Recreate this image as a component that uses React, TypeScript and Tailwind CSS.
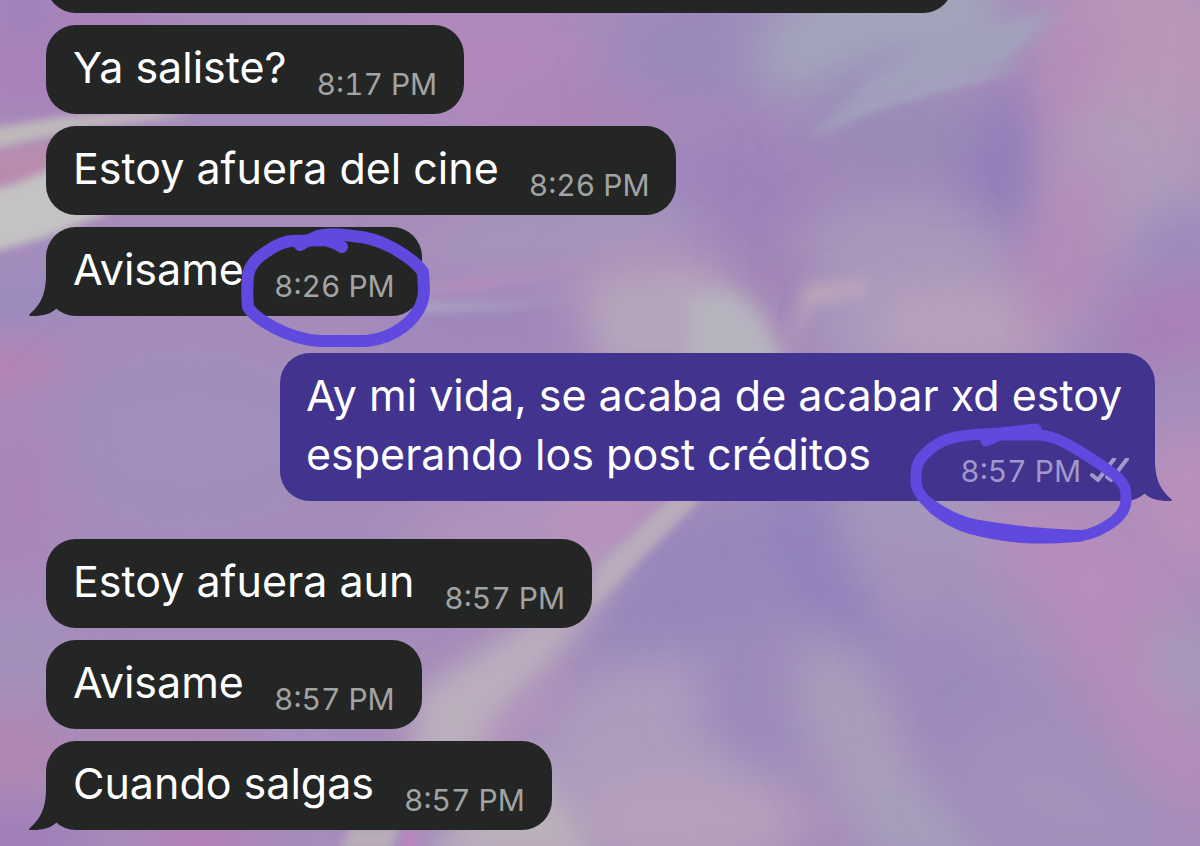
type Message = {
  text: string;
  time: string;
  tail?: boolean;
  circled?: boolean;
};

const firstGroup: Message[] = [
  { text: "Ya saliste?", time: "8:17 PM" },
  { text: "Estoy afuera del cine", time: "8:26 PM" },
  { text: "Avisame", time: "8:26 PM", tail: true, circled: true },
];

const lastGroup: Message[] = [
  { text: "Estoy afuera aun", time: "8:57 PM" },
  { text: "Avisame", time: "8:57 PM" },
  { text: "Cuando salgas", time: "8:57 PM", tail: true },
];

// cx, cy, rx, ry, rotation, colour
const glows: [number, number, number, number, number, string][] = [
  [60, 50, 130, 70, 0, "#a982b9"],
  [22, 8, 30, 22, 0, "#9783be"],
  [20, 310, 70, 40, -10, "#9b8cbe"],
  [5, 368, 70, 20, -5, "#bd80b2"],
  [190, 440, 150, 90, 0, "#a28eba"],
  [20, 500, 40, 90, 0, "#aa85b9"],
  [25, 660, 50, 60, 0, "#a490bb"],
  [10, 755, 60, 40, 0, "#b386b0"],
  [10, 840, 80, 30, 0, "#a07cba"],
  [200, 848, 60, 22, 0, "#bb7ab4"],
  [170, 735, 90, 12, 0, "#bc82b4"],
  [300, 733, 60, 12, 0, "#a590c0"],
  [480, 60, 110, 70, 0, "#b188bb"],
  [610, 105, 110, 30, -10, "#ab84b9"],
  [700, 50, 90, 60, 0, "#9b89bc"],
  [745, 190, 90, 60, 0, "#9c83bb"],
  [560, 235, 160, 25, -6, "#a795bd"],
  [480, 330, 120, 22, -4, "#9c85bd"],
  [650, 300, 80, 50, 0, "#b29cba"],
  [785, 285, 30, 60, -20, "#a184b8"],
  [880, 30, 130, 60, -15, "#a3a5bb"],
  [860, 90, 70, 18, -30, "#9788b9"],
  [900, 145, 90, 40, -10, "#988ab6"],
  [840, 180, 60, 30, 0, "#a088b9"],
  [1010, 175, 50, 90, 15, "#937fba"],
  [910, 250, 110, 45, 0, "#a998bb"],
  [960, 325, 130, 45, 0, "#b7a3bc"],
  [845, 322, 40, 20, 0, "#a397be"],
  [1140, 60, 90, 120, 0, "#b997b8"],
  [1072, 80, 24, 90, 15, "#b58bb8"],
  [1130, 180, 80, 80, 0, "#b09cba"],
  [1065, 250, 36, 100, 15, "#b58cb9"],
  [1180, 255, 50, 50, 0, "#9d8bbd"],
  [1170, 325, 90, 35, -20, "#aa7fb8"],
  [1085, 348, 30, 18, 0, "#998dbb"],
  [1180, 425, 40, 40, 0, "#a08dbd"],
  [1190, 500, 60, 80, 0, "#b890bb"],
  [540, 525, 140, 35, -10, "#b294be"],
  [740, 620, 150, 120, -20, "#9787bc"],
  [650, 750, 120, 90, -20, "#ae9cbd"],
  [790, 690, 90, 100, 20, "#9d8abc"],
  [690, 820, 120, 50, 0, "#b5a0bc"],
  [850, 580, 50, 110, -35, "#9282bc"],
  [930, 530, 100, 60, 20, "#a597bb"],
  [960, 620, 120, 60, 40, "#a592bb"],
  [860, 740, 50, 110, -25, "#ab9cba"],
  [930, 830, 70, 40, 20, "#a5a0bc"],
  [980, 730, 60, 130, -30, "#9d8abc"],
  [1060, 800, 110, 80, 20, "#a390bb"],
  [1090, 570, 110, 55, 30, "#b68dbb"],
  [1140, 690, 40, 140, -32, "#b78dbb"],
  [1190, 670, 36, 60, -30, "#a899b9"],
];

type Blur = "soft" | "mid" | "fine";

// sharper folds of light: points, blur strength, colour
const folds: [string, Blur, string][] = [
  ["-20,150 60,140 110,160 70,185 -20,200", "mid", "#b98cae"],
  ["-20,130 60,117 150,110 190,115 90,128 -20,152", "fine", "#bfb9bb"],
  ["-20,194 20,182 60,165 110,212 50,236 -20,256", "fine", "#c4c2c3"],
  ["380,292 470,278 600,262 480,290 390,298", "fine", "#b18ebc"],
  ["400,302 500,303 580,297 500,308 420,312", "fine", "#a9a4c1"],
  ["600,290 700,275 760,305 790,365 600,365", "soft", "#b5a5bc"],
  ["690,300 730,292 758,318 785,370 690,370", "mid", "#b6b4bf"],
  ["560,500 680,500 600,560 570,590", "soft", "#b993bc"],
  ["672,496 704,496 620,580 590,610 600,565", "fine", "#b9acbc"],
  ["640,540 600,600 530,690 480,760 405,770 420,690 560,600", "soft", "#bbaebd"],
  ["480,735 540,680 560,700 500,750", "soft", "#b394bd"],
  ["420,860 530,755 600,860", "soft", "#bcb0bb"],
  ["404,830 418,830 416,850 404,850", "fine", "#c084be"],
  ["340,850 350,828 400,828 390,850", "fine", "#b9adb9"],
  ["808,138 880,98 1000,66 1060,10 960,30 870,80", "mid", "#a2a2bc"],
  ["808,136 880,108 960,86 1030,66 960,74 870,100", "fine", "#a3a2bd"],
  ["805,285 870,280 870,293 812,305 790,350", "mid", "#bca8ba"],
];

function Wallpaper() {
  return (
    <svg
      className="absolute inset-0 h-full w-full"
      viewBox="0 0 1200 846"
      preserveAspectRatio="none"
      aria-hidden="true"
    >
      <defs>
        <filter id="haze" x="-150%" y="-200%" width="400%" height="500%">
          <feGaussianBlur stdDeviation="24" />
        </filter>
        <filter id="soft" x="-50%" y="-50%" width="200%" height="200%">
          <feGaussianBlur stdDeviation="14" />
        </filter>
        <filter id="mid" x="-50%" y="-50%" width="200%" height="200%">
          <feGaussianBlur stdDeviation="8" />
        </filter>
        <filter id="fine" x="-50%" y="-100%" width="200%" height="300%">
          <feGaussianBlur stdDeviation="4" />
        </filter>
      </defs>
      <rect width="1200" height="846" fill="#a58cba" />
      {glows.map(([cx, cy, rx, ry, angle, fill], i) => (
        <ellipse
          key={i}
          cx={cx}
          cy={cy}
          rx={rx}
          ry={ry}
          fill={fill}
          transform={`rotate(${angle} ${cx} ${cy})`}
          filter="url(#haze)"
        />
      ))}
      {folds.map(([points, blur, fill], i) => (
        <polygon key={i} points={points} fill={fill} filter={`url(#${blur})`} />
      ))}
    </svg>
  );
}

function Tail({ className }: { className: string }) {
  return (
    <svg viewBox="0 0 30 60" className={className} aria-hidden="true">
      <path
        fill="currentColor"
        d="M17 0 L17 18 C17 38 12 48 1 58 C-1 60 0 60 4 60 C14 60 22 58 28 52 L30 40 L26 0 Z"
      />
    </svg>
  );
}

function DoubleCheck() {
  return (
    <svg
      viewBox="0 0 40 26"
      className="h-[26px] w-10"
      fill="none"
      stroke="currentColor"
      strokeWidth="4"
      strokeLinecap="round"
      strokeLinejoin="round"
      aria-label="Read"
    >
      <path d="M3 17 L9 22 L25 1" />
      <path d="M18 19 L22 22 L38 1" />
    </svg>
  );
}

// Hand drawn marker rings around the timestamps
function SmallRing() {
  return (
    <svg
      viewBox="240 228 190 122"
      className="absolute top-0 -right-2 h-[122px] w-[190px] overflow-visible"
      fill="none"
      stroke="#6049df"
      strokeWidth="12"
      strokeLinecap="round"
      strokeLinejoin="round"
      aria-hidden="true"
    >
      <path d="M300 246 L298 242 C288 241 276 246 266 253 C255 260 249 268 248 277 C247 288 247 298 248 308 C253 316 262 322 273 328 C288 336 302 341 320 342 L367 342 C382 340 394 335 403 328 C416 318 424 306 424 290 L423 273 C416 263 404 255 391 248 C378 241 366 238 353 237 C340 235 326 235 318 237 C310 240 304 244 300 246" />
      <path d="M298 242 L324 241 C331 242 337 245 342 248" />
    </svg>
  );
}

function WideRing() {
  return (
    <svg
      viewBox="908 420 226 126"
      className="absolute right-[21px] -bottom-[45px] h-[126px] w-[226px] overflow-visible"
      fill="none"
      stroke="#6049df"
      strokeWidth="11"
      strokeLinecap="round"
      strokeLinejoin="round"
      aria-hidden="true"
    >
      <path d="M1036 429 L1000 433 C984 434 973 434 962 436 C946 438 932 446 923 456 C915 464 916 474 916 484 C918 494 926 501 934 509 C946 519 958 525 973 529 C990 533 1006 536 1022 537 L1080 536 C1093 534 1105 528 1114 521 C1123 514 1127 506 1126 496 C1126 488 1124 484 1118 478 C1109 469 1090 458 1073 447 C1060 440 1052 436 1040 435 L1000 435 L986 441" />
      {/* The stroke swells along the bottom */}
      <path
        fill="#6049df"
        stroke="none"
        d="M930 497 C948 510 962 517 980 520 C1010 525 1040 529 1082 530 L1084 541 C1060 544 1040 544 1022 543 C1000 541 985 538 970 534 C952 529 938 519 927 509 Z"
      />
    </svg>
  );
}

function Incoming({ text, time, tail, circled }: Message) {
  return (
    <li className="relative flex w-fit items-end gap-[30px] rounded-[30px] bg-[#242625] px-[27px] pt-[13px] pb-[17px] text-[#242625]">
      {tail && <Tail className="absolute bottom-0 -left-[17px] h-[60px] w-[30px]" />}
      <p className="text-[43px] leading-[59px] text-white">{text}</p>
      <time className="text-[30px] leading-[26px] whitespace-nowrap text-[#a2a3a3] tabular-nums">
        {time}
      </time>
      {circled && <SmallRing />}
    </li>
  );
}

export default function App() {
  return (
    <main className="relative min-h-screen overflow-hidden font-[Inter,'Liberation_Sans',sans-serif]">
      <Wallpaper />

      <div className="relative pr-[45px] pb-[15px] pl-[46px]">
        <ul className="flex flex-col gap-3">
          {/* Bottom edge of a message that has scrolled away */}
          <li className="-mt-[76px] h-[89px] w-full max-w-[907px] rounded-[30px] bg-[#242625]" />
          {firstGroup.map((message) => (
            <Incoming key={message.text} {...message} />
          ))}
        </ul>

        {/* Outgoing message, its time floats at the end of the last line */}
        <div className="relative mt-[37px] ml-auto w-full max-w-[875px] rounded-[30px] bg-[#42338f] px-[26px] pt-[13px] pb-[17px] text-[#42338f]">
          <Tail className="absolute -right-[17px] bottom-0 h-[60px] w-[30px] -scale-x-100" />
          <p className="text-[43px] leading-[59px] text-white">
            Ay mi vida, se acaba de acabar xd estoy esperando los post créditos
            <span className="float-right flex h-[59px] items-end gap-2 text-[#a199cc]">
              <time className="text-[30px] leading-[26px] tabular-nums">8:57 PM</time>
              <DoubleCheck />
            </span>
          </p>
          <WideRing />
        </div>

        <ul className="mt-[38px] flex flex-col gap-3">
          {lastGroup.map((message) => (
            <Incoming key={message.text} {...message} />
          ))}
        </ul>
      </div>
    </main>
  );
}
